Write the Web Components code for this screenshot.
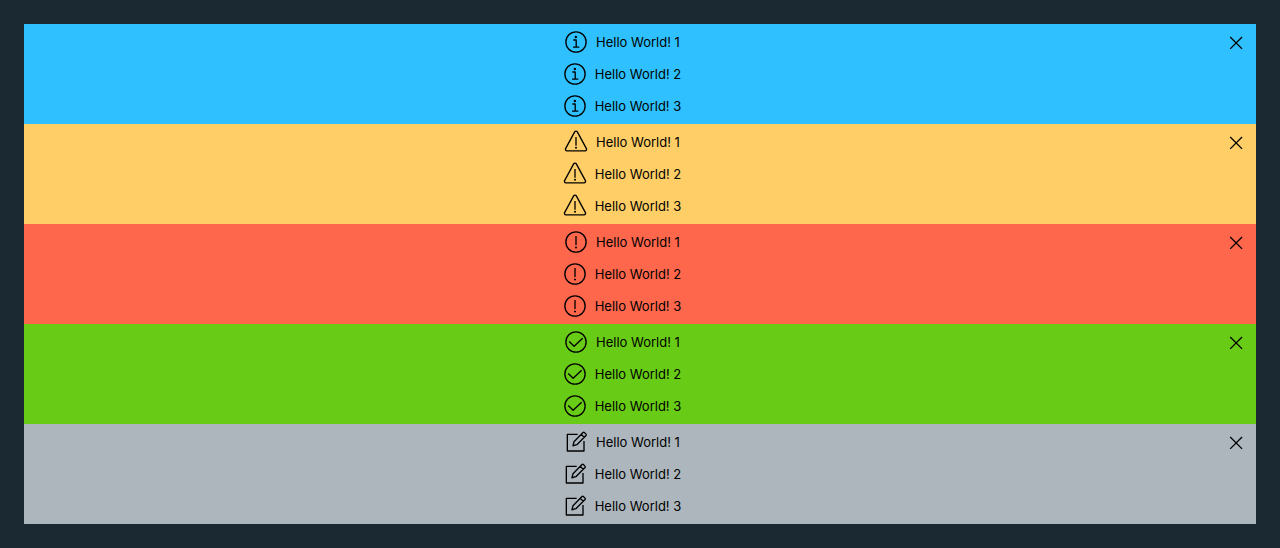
<!DOCTYPE html>
<html lang="en">
<head>
<meta charset="utf-8">
<meta name="viewport" content="width=device-width, initial-scale=1">
<title>Alert banners</title>
<style>
  body { margin: 0; padding: 24px; background: #1b2a32; color: #000; font: 13px/24px Inter, "Open Sans", sans-serif; }
</style>
</head>
<body>
<alert-stack>
  <alert-banner status="info">
    <alert-item status="info">Hello World! 1</alert-item>
    <alert-item status="info">Hello World! 2</alert-item>
    <alert-item status="info">Hello World! 3</alert-item>
  </alert-banner>
  <alert-banner status="warning">
    <alert-item status="warning">Hello World! 1</alert-item>
    <alert-item status="warning">Hello World! 2</alert-item>
    <alert-item status="warning">Hello World! 3</alert-item>
  </alert-banner>
  <alert-banner status="danger">
    <alert-item status="danger">Hello World! 1</alert-item>
    <alert-item status="danger">Hello World! 2</alert-item>
    <alert-item status="danger">Hello World! 3</alert-item>
  </alert-banner>
  <alert-banner status="success">
    <alert-item status="success">Hello World! 1</alert-item>
    <alert-item status="success">Hello World! 2</alert-item>
    <alert-item status="success">Hello World! 3</alert-item>
  </alert-banner>
  <alert-banner status="neutral">
    <alert-item status="neutral">Hello World! 1</alert-item>
    <alert-item status="neutral">Hello World! 2</alert-item>
    <alert-item status="neutral">Hello World! 3</alert-item>
  </alert-banner>
</alert-stack>
<script>
const SHAPES = {
  info: '<circle cx="18" cy="18" r="15.2"/><path d="M14 15h4.3v10.8M13.5 25.8h9.5"/><circle cx="17.8" cy="10.4" r="1.8" fill="currentColor" stroke="none"/>',
  warning: '<path d="M16 2.8 2.4 28a2.3 2.3 0 0 0 2 3.4h27.2a2.3 2.3 0 0 0 2-3.4L20 2.8a2.3 2.3 0 0 0-4 0Z"/><path d="M18 10.5v13"/><circle cx="18" cy="26.8" r="1.5" fill="currentColor" stroke="none"/>',
  danger: '<circle cx="18" cy="18" r="15.2"/><path d="M18 9v13.5"/><circle cx="18" cy="26.3" r="1.5" fill="currentColor" stroke="none"/>',
  success: '<circle cx="18" cy="18" r="15.2"/><path d="m7.8 17.2 7.4 7.3L28 12.4"/>',
  neutral: '<path d="M20.5 6.5H5v25h25V16.5"/><path d="m15 17.5 13.5-13.7a1.5 1.5 0 0 1 2.1 0l2.4 2.4a1.5 1.5 0 0 1 0 2.1L19.3 22l-5.8 1.6ZM25.8 6.5l4.6 4.6"/>',
  close: '<path d="m9.3 10.5 17.8 17.8m0-17.8L9.3 28.3"/>'
};

class AlertIcon extends HTMLElement {
  connectedCallback() {
    if (this.shadowRoot) return;
    this.attachShadow({ mode: 'open' }).innerHTML = `
      <style>
        :host { display: block; flex: none; width: 24px; height: 24px; }
        svg { display: block; width: 100%; height: 100%; }
      </style>
      <svg viewBox="0 0 36 36" fill="none" stroke="currentColor" stroke-width="2" stroke-linejoin="round" aria-hidden="true">${SHAPES[this.getAttribute('shape')]}</svg>`;
  }
}

class AlertItem extends HTMLElement {
  connectedCallback() {
    if (this.shadowRoot) return;
    this.attachShadow({ mode: 'open' }).innerHTML = `
      <style>
        :host { display: flex; align-items: center; gap: 8px; }
      </style>
      <alert-icon shape="${this.getAttribute('status')}"></alert-icon>
      <span><slot></slot></span>`;
  }
}

class AlertBanner extends HTMLElement {
  connectedCallback() {
    if (this.shadowRoot) return;
    this.attachShadow({ mode: 'open' }).innerHTML = `
      <style>
        :host { display: flex; align-items: flex-start; gap: 12px; padding: 6px 8px; background: #adb6bc; }
        :host([status="info"]) { background: #2fc0ff; }
        :host([status="warning"]) { background: #ffce66; }
        :host([status="danger"]) { background: #ff674c; }
        :host([status="success"]) { background: #68cc16; }
        .items { flex: 1; display: flex; flex-direction: column; align-items: center; gap: 8px; }
        button { flex: none; display: block; padding: 0; border: 0; background: none; color: inherit; cursor: pointer; }
      </style>
      <div class="items"><slot></slot></div>
      <button type="button" aria-label="Close alert"><alert-icon shape="close"></alert-icon></button>`;
    this.shadowRoot.querySelector('button').addEventListener('click', () => this.remove());
  }
}

class AlertStack extends HTMLElement {
  connectedCallback() {
    if (this.shadowRoot) return;
    this.attachShadow({ mode: 'open' }).innerHTML = `
      <style>:host { display: flex; flex-direction: column; }</style>
      <slot></slot>`;
  }
}

customElements.define('alert-icon', AlertIcon);
customElements.define('alert-item', AlertItem);
customElements.define('alert-banner', AlertBanner);
customElements.define('alert-stack', AlertStack);
</script>
</body>
</html>
